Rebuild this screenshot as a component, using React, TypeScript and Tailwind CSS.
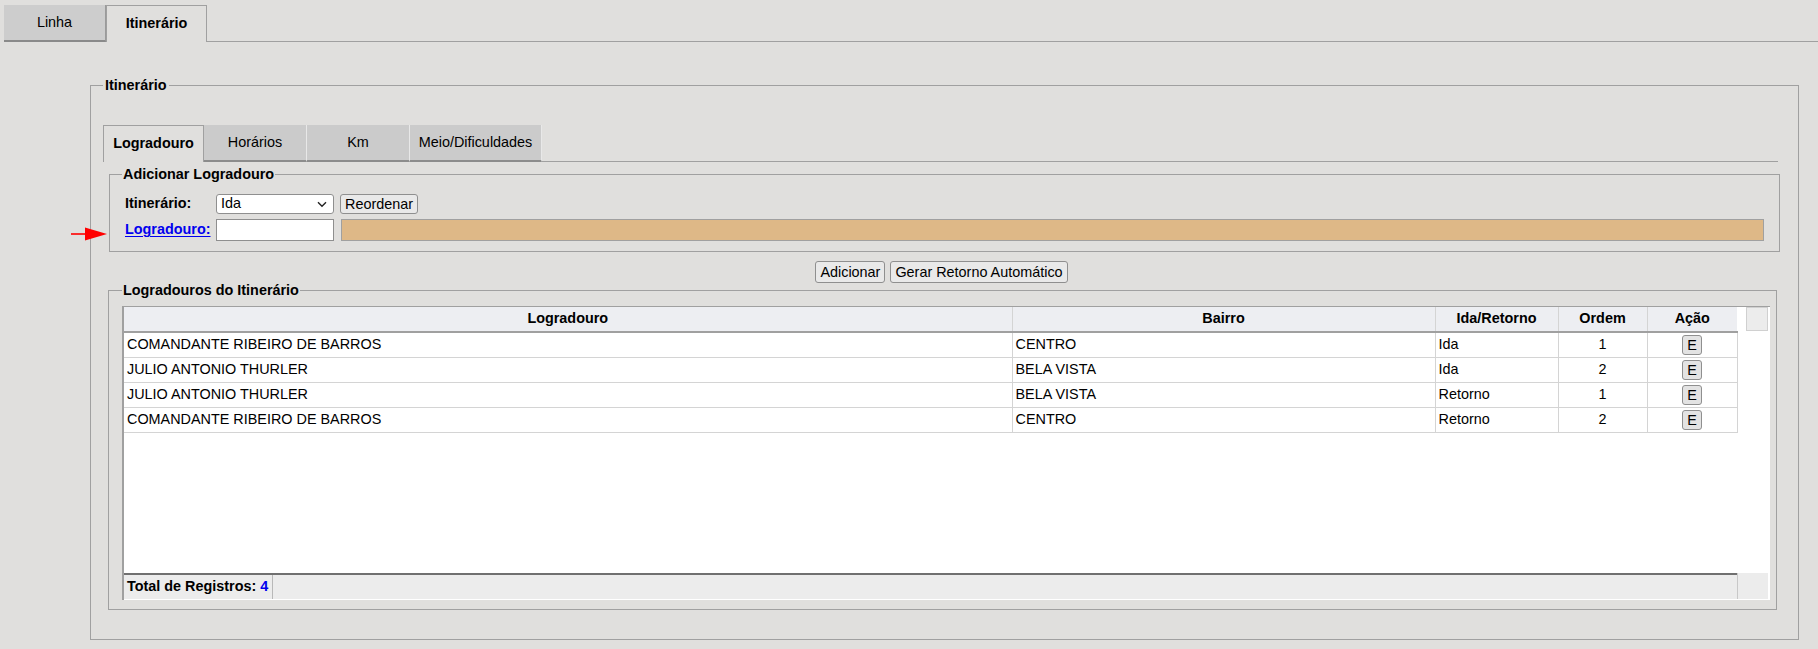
import React from 'react';

type Registro = {
    logradouro: string;
    bairro: string;
    sentido: string;
    ordem: number;
};

const registros: Registro[] = [
    { logradouro: 'COMANDANTE RIBEIRO DE BARROS', bairro: 'CENTRO', sentido: 'Ida', ordem: 1 },
    { logradouro: 'JULIO ANTONIO THURLER', bairro: 'BELA VISTA', sentido: 'Ida', ordem: 2 },
    { logradouro: 'JULIO ANTONIO THURLER', bairro: 'BELA VISTA', sentido: 'Retorno', ordem: 1 },
    { logradouro: 'COMANDANTE RIBEIRO DE BARROS', bairro: 'CENTRO', sentido: 'Retorno', ordem: 2 },
];

const btn =
    'h-[20px] px-[4px] bg-[#e9e9e9] border border-[#8f8f8f] rounded-[3px] text-[14.4px] leading-none text-black whitespace-nowrap';

const InnerTab = ({ label, active = false, width }: { label: string; active?: boolean; width: string }) =>
    active ? (
        <div className={`${width} h-[37px] flex items-center justify-center border-t border-l border-r border-[#a0a0a0] font-bold`}>
            {label}
        </div>
    ) : (
        <div className={`${width} h-[37px] flex items-center justify-center bg-[#cbcbcb] border-r border-[#e8e8e8] border-b-2 border-b-[#8c8c8c]`}>
            {label}
        </div>
    );

const App = () => {
    return (
        <div
            className="min-h-[649px] bg-[#e0dfdd] text-[14.4px] text-black"
            style={{ fontFamily: '"Liberation Sans", Arial, sans-serif' }}
        >
            {/* abas principais */}
            <div className="flex items-end pt-[5px] pl-[4px]">
                <div className="w-[102px] h-[37px] flex items-center justify-center bg-[#cdcdcd] border-r border-[#9a9a9a] border-b-2 border-b-[#8a8a8a]">
                    Linha
                </div>
                <div className="w-[101px] h-[37px] flex items-center justify-center border-t border-l border-r border-[#a0a0a0] font-bold">
                    Itinerário
                </div>
                <div className="flex-1 border-b border-[#a0a0a0]" />
            </div>

            <fieldset className="relative mt-[35px] ml-[90px] mr-[19px] mb-[10px] border border-[#a0a0a0] pl-[12px] pr-[18px] pb-[29px]">
                <legend className="px-[2px] font-bold leading-[17px]">Itinerário</legend>

                {/* seta vermelha */}
                <svg className="absolute left-[-20px] top-[133px]" width="36" height="15" viewBox="0 0 36 15">
                    <line x1="0" y1="7" x2="18" y2="7" stroke="#ff0000" strokeWidth="1.6" />
                    <polygon points="14,0.5 36,7 14,13.5" fill="#ff0000" />
                </svg>

                <div className="mt-[31px] mr-[2px] flex items-end">
                    <InnerTab label="Logradouro" active width="w-[101px]" />
                    <InnerTab label="Horários" width="w-[103px]" />
                    <InnerTab label="Km" width="w-[103px]" />
                    <InnerTab label="Meio/Dificuldades" width="w-[132px]" />
                    <div className="flex-1 border-b border-[#a0a0a0]" />
                </div>

                <fieldset className="mt-[4px] ml-[6px] border border-[#a0a0a0] pl-[12px] pr-[15px] pb-[10px]">
                    <legend className="px-[1px] font-bold leading-[17px]">Adicionar Logradouro</legend>
                    <div className="pl-[3px]">
                        <div className="mt-[11px] flex items-center h-[20px]">
                            <span className="w-[91px] font-bold">Itinerário:</span>
                            <div className="relative w-[118px] h-[20px] bg-white border border-[#8f8f8f] rounded-[3px] flex items-center pl-[4px]">
                                Ida
                                <svg className="absolute right-[6px] top-[6px]" width="10" height="7" viewBox="0 0 10 7">
                                    <path d="M1 1.2 L5 5.2 L9 1.2" fill="none" stroke="#222" strokeWidth="1.4" />
                                </svg>
                            </div>
                            <button className={`${btn} ml-[6px]`}>Reordenar</button>
                        </div>
                        <div className="mt-[5px] flex items-center h-[22px]">
                            <a className="w-[91px] font-bold text-[#0000ee] underline underline-offset-2 cursor-pointer">
                                Logradouro:
                            </a>
                            <input className="w-[118px] h-[22px] bg-white border border-[#8f8f8f] px-[3px] outline-none" />
                            <div className="flex-1 ml-[7px] h-[22px] bg-[#deb887] border border-[#a0a0a0]" />
                        </div>
                    </div>
                </fieldset>

                <div className="mt-[9px] flex justify-center gap-[5px]">
                    <button className={`${btn} h-[22px]`}>Adicionar</button>
                    <button className={`${btn} h-[22px]`}>Gerar Retorno Automático</button>
                </div>

                <fieldset className="-mt-[1px] ml-[5px] mr-[3px] border border-[#a0a0a0] pl-[13px] pr-[6px] pb-[9px]">
                    <legend className="px-[1px] font-bold leading-[17px]">Logradouros do Itinerário</legend>
                    <div className="mt-[7px] h-[294px] bg-white border-l-2 border-t border-[#a0a0a0] flex flex-col">
                        <div className="flex">
                            <table className="w-[1613px] table-fixed border-collapse">
                                <colgroup>
                                    <col className="w-[888px]" />
                                    <col className="w-[423px]" />
                                    <col className="w-[123px]" />
                                    <col className="w-[89px]" />
                                    <col className="w-[90px]" />
                                </colgroup>
                                <thead>
                                    <tr className="h-[25px] bg-[#edeef2] border-b-2 border-[#a0a0a0]">
                                        <th className="border-r border-[#d4d4d4] font-bold">Logradouro</th>
                                        <th className="border-r border-[#d4d4d4] font-bold">Bairro</th>
                                        <th className="border-r border-[#d4d4d4] font-bold">Ida/Retorno</th>
                                        <th className="border-r border-[#d4d4d4] font-bold">Ordem</th>
                                        <th className="font-bold">Ação</th>
                                    </tr>
                                </thead>
                                <tbody>
                                    {registros.map((r, i) => (
                                        <tr key={i} className="h-[25px] border-b border-[#d4d4d4]">
                                            <td className="border-r border-[#d4d4d4] pl-[3px]">{r.logradouro}</td>
                                            <td className="border-r border-[#d4d4d4] pl-[3px]">{r.bairro}</td>
                                            <td className="border-r border-[#d4d4d4] pl-[3px]">{r.sentido}</td>
                                            <td className="border-r border-[#d4d4d4] text-center">{r.ordem}</td>
                                            <td className="border-r border-[#d4d4d4] text-center">
                                                <button className="w-[20px] h-[20px] bg-[#e3e3e3] border border-[#8f8f8f] rounded-[3px] leading-none align-middle">
                                                    E
                                                </button>
                                            </td>
                                        </tr>
                                    ))}
                                </tbody>
                            </table>
                            <div className="flex-1">
                                <div className="ml-[8px] w-[22px] h-[24px] bg-[#ececec] border border-[#d0d0d0]" />
                            </div>
                        </div>
                        <div className="flex-1" />
                        <div className="flex h-[26px] mb-[1px]">
                            <div className="w-[1613px] bg-[#ececec] border-t-2 border-[#707070] flex items-center">
                                <span className="h-full flex items-center pl-[3px] pr-[4px] border-r border-[#b8b8b8] font-bold">
                                    Total de Registros:&nbsp;<span className="text-[#0000ee]">4</span>
                                </span>
                            </div>
                            <div className="flex-1 mr-[2px] bg-[#ececec] border-l border-[#c8c8c8]" />
                        </div>
                    </div>
                </fieldset>
            </fieldset>
        </div>
    );
};

export default App;
